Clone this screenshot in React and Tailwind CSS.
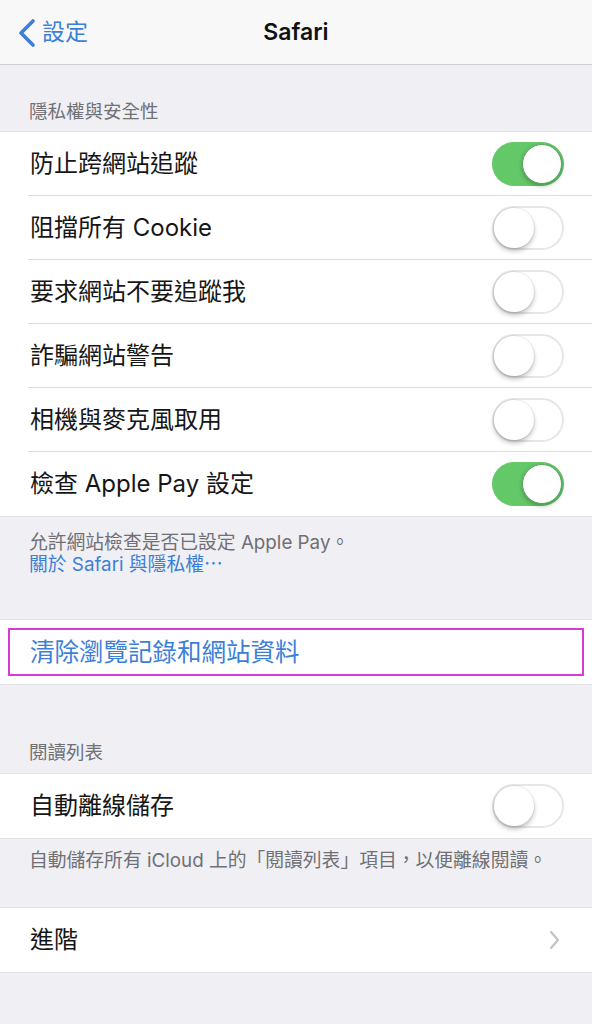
import React from "react";

const font = { fontFamily: '"Inter", "Noto Sans CJK TC", sans-serif' };

function Toggle({ on }) {
  return on ? (
    <div className="relative h-[44px] w-[72px] rounded-full bg-[#62c868]">
      <div className="absolute right-[2px] top-[2px] h-[40px] w-[40px] rounded-full bg-white border border-[#5aa35e] shadow-[0_2px_4px_rgba(0,0,0,0.25)]" />
    </div>
  ) : (
    <div className="relative h-[44px] w-[72px] rounded-full bg-white border-2 border-[#e6e6e9]">
      <div className="absolute left-[0px] top-[0px] h-[40px] w-[40px] rounded-full bg-white shadow-[0_3px_5px_rgba(0,0,0,0.25),0_0_0_1px_rgba(0,0,0,0.05)]" />
    </div>
  );
}

function Row({ label, toggle, last, chevron }) {
  return (
    <div className="flex h-[64px] items-center pl-[28px]">
      <div className={`flex h-full flex-1 items-center pr-[28px] ${last ? "" : "border-b border-[#dcdce0]"}`}>
        <span className="flex-1 pl-[2px] text-[24px] leading-[30px] text-[#161616]">{label}</span>
        {toggle !== undefined && <Toggle on={toggle} />}
        {chevron && (
          <svg width="12" height="20" viewBox="0 0 12 20" className="mr-[3px]">
            <path d="M2 2 L9 10 L2 18" fill="none" stroke="#c4c4c8" strokeWidth="2.2" strokeLinecap="round" strokeLinejoin="round" />
          </svg>
        )}
      </div>
    </div>
  );
}

const section = "bg-white shadow-[0_1px_0_#e2e2e6,0_-1px_0_#e2e2e6]";

export default function App() {
  const privacy = [
    ["防止跨網站追蹤", true],
    ["阻擋所有 Cookie", false],
    ["要求網站不要追蹤我", false],
    ["詐騙網站警告", false],
    ["相機與麥克風取用", false],
    ["檢查 Apple Pay 設定", true],
  ];
  return (
    <div className="min-h-[1024px] w-[592px] bg-[#efeff4]" style={font}>
      {/* Nav bar */}
      <div className="relative flex h-[65px] items-center border-b border-[#cfcfd3] bg-[#f8f8f8]">
        <div className="flex items-center pl-[16px]">
          <svg width="21" height="30" viewBox="0 0 21 30" className="mt-[2px]">
            <path d="M17 3 L5 15 L17 27" fill="none" stroke="#3b7fd9" strokeWidth="3.6" strokeLinecap="round" strokeLinejoin="round" />
          </svg>
          <span className="ml-[5px] text-[23px] leading-[30px] text-[#3b7fd9]">設定</span>
        </div>
        <div className="pointer-events-none absolute inset-x-0 text-center text-[23px] font-semibold text-[#111]">Safari</div>
      </div>

      {/* Privacy header */}
      <div className="flex h-[67px] items-end pb-[9px] pl-[29px] text-[18.5px] leading-[24px] text-[#707075]">隱私權與安全性</div>
      <div className={section}>
        {privacy.map(([l, t], i) => (
          <Row key={l} label={l} toggle={t} last={i === privacy.length - 1} />
        ))}
      </div>
      <div className="h-[104px] pl-[29px] pt-[16px] text-[18.8px] leading-[22px]">
        <div className="text-[#6f6f74]">允許網站檢查是否已設定 Apple Pay。</div>
        <div className="text-[#3b7fd9]">關於 Safari 與隱私權⋯</div>
      </div>

      {/* Clear history */}
      <div className={`${section} px-[8px] py-[8px]`}>
        <div className="flex h-[48px] items-center border-2 border-[#d83ad8] pl-[20px] text-[24.5px] leading-[30px] text-[#3b7fd9]">
          清除瀏覽記錄和網站資料
        </div>
      </div>

      {/* Reading list */}
      <div className="flex h-[90px] items-end pb-[10px] pl-[29px] text-[18.5px] leading-[24px] text-[#707075]">閱讀列表</div>
      <div className={section}>
        <Row label="自動離線儲存" toggle={false} last />
      </div>
      <div className="h-[70px] pl-[29px] pt-[12px] text-[18.8px] leading-[22px] text-[#707075]">
        自動儲存所有 iCloud 上的「閱讀列表」項目，以便離線閱讀。
      </div>

      <div className={section}>
        <Row label="進階" chevron last />
      </div>
    </div>
  );
}
